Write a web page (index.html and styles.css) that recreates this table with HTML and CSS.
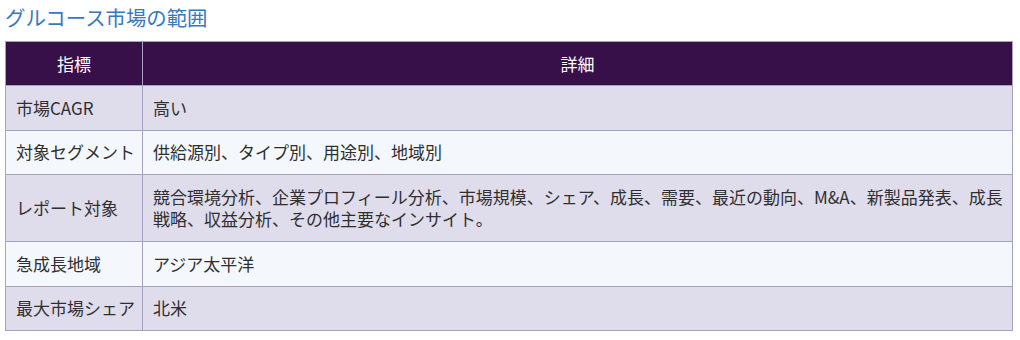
FILE: index.html
```html
<!DOCTYPE html>
<html lang="ja">
<head>
<meta charset="utf-8">
<title>グルコース市場の範囲</title>
<link rel="stylesheet" href="styles.css">
</head>
<body>
<div class="page">
  <h2 class="title">グルコース市場の範囲</h2>
  <table class="scope">
    <colgroup><col class="c1"><col class="c2"></colgroup>
    <thead>
      <tr><th>指標</th><th>詳細</th></tr>
    </thead>
    <tbody>
      <tr class="odd"><td class="key">市場CAGR</td><td>高い</td></tr>
      <tr class="even"><td class="key">対象セグメント</td><td>供給源別、タイプ別、用途別、地域別</td></tr>
      <tr class="odd"><td class="key">レポート対象</td><td>競合環境分析、企業プロフィール分析、市場規模、シェア、成長、需要、最近の動向、M&amp;A、新製品発表、成長戦略、収益分析、その他主要なインサイト。</td></tr>
      <tr class="even"><td class="key">急成長地域</td><td>アジア太平洋</td></tr>
      <tr class="odd"><td class="key">最大市場シェア</td><td>北米</td></tr>
    </tbody>
  </table>
</div>
</body>
</html>
```

FILE: styles.css
```css
html, body {
  margin: 0;
  padding: 0;
  background: #ffffff;
}
.page {
  padding: 3px 5px 0 5px;
  font-family: "Noto Sans CJK JP", "Noto Sans", sans-serif;
  color: #2f2f2f;
}
.title {
  margin: 0 0 10px 0;
  font-size: 20.4px;
  line-height: 28px;
  font-weight: 400;
  color: #3579c2;
}
.scope {
  width: 1008px;
  border-collapse: collapse;
  table-layout: fixed;
  font-size: 17px;
  line-height: 22.5px;
}
.c1 { width: 137px; }
.scope th,
.scope td {
  border: 1px solid #a6a1bf;
  padding: 10.5px 5px 10.5px 10px;
  text-align: left;
  vertical-align: middle;
  font-weight: 400;
}
.scope td.key {
  white-space: nowrap;
  padding-right: 2px;
}
.scope th {
  background: #37104a;
  color: #ffffff;
  text-align: center;
  padding: 10.5px 5px 10px 5px;
}
.scope tr.odd td { background: #dfdcec; }
.scope tr.even td { background: #f4f8fc; }
```
